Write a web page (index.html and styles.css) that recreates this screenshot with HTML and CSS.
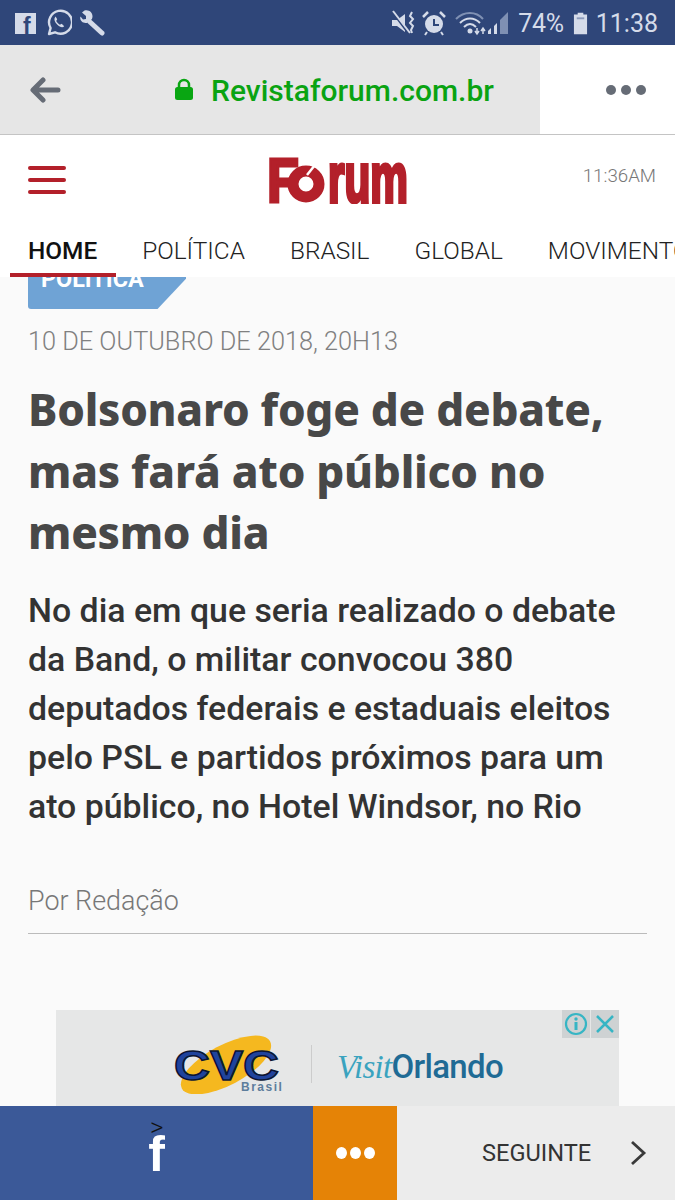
FILE: index.html
```html
<!DOCTYPE html>
<html lang="en">

<head>
    <meta charset="UTF-8">
    <meta name="viewport" content="width=device-width, initial-scale=1.0">
    <title>Forum</title>
    <link rel="stylesheet" href="styles.css">
</head>

<body>

    <div class="status-bar">
        <div class="status-left">
            <svg class="icon-fb" width="21" height="24" viewBox="0 0 21 24">
                <rect x="0" y="2" width="21" height="21" fill="#d5dbe9"/>
                <text x="8" y="23" class="fb-letter">f</text>
            </svg>
            <svg width="26" height="28" viewBox="0 0 26 28" fill="none">
                <path d="M3 25l1.600-6A11.500 11.500 0 1 1 9 23.300z" stroke="#d5dbe9" stroke-width="2.400" stroke-linejoin="round"/>
                <path d="M9 8.500c-1.500 2 .2 5 2.400 7.200s5 3.300 6.800 1.600l-2.500-2.500-1.800 1c-1.500-.8-3-2.400-3.700-3.800l1-1.700-1.600-2.700z" fill="#d5dbe9"/>
            </svg>
            <svg class="icon-wrench" width="26" height="26" viewBox="0 0 26 26" fill="none">
                <path d="M11 12L23 23" stroke="#d5dbe9" stroke-width="5" stroke-linecap="round"/>
                <path d="M3 2.500l4 3.500 0 3-3 0.500L1.500 6.500C0 11 5 14.500 9 12.500L13 9C15 4 11 -1 5.500 0.500z" fill="#d5dbe9"/>
            </svg>
        </div>
        <div class="status-right">
            <svg class="icon-mute" width="26" height="26" viewBox="0 0 26 26" fill="none">
                <path d="M1 9h5l8-6v18L6 15H1z" fill="#d5dbe9" transform="translate(0 1)"/>
                <path d="M2 3l15 20" stroke="#2f4679" stroke-width="2"/>
                <path d="M2 1l17 22" stroke="#d5dbe9" stroke-width="2"/>
                <path d="M21 2l-2 4 3 3-3 4 3 3-2 4 1 3" stroke="#d5dbe9" stroke-width="2"/>
            </svg>
            <svg width="24" height="26" viewBox="0 0 24 26" fill="none">
                <circle cx="12" cy="14" r="9" fill="#d5dbe9"/>
                <path d="M12 9v6h5" stroke="#2f4679" stroke-width="2"/>
                <path d="M1 7l5-5M23 7l-5-5" stroke="#d5dbe9" stroke-width="2.500"/>
                <path d="M5 22l-2 3M19 22l2 3" stroke="#d5dbe9" stroke-width="2"/>
            </svg>
            <svg class="icon-net" width="56" height="26" viewBox="0 0 56 26" fill="none">
                <path d="M1 9C9 1 21 1 28 9" stroke="#7f90b3" stroke-width="2"/>
                <path d="M5 13C11 7 19 7 25 13" stroke="#d5dbe9" stroke-width="2"/>
                <path d="M9 17C13 13 17 13 21 17" stroke="#d5dbe9" stroke-width="2"/>
                <circle cx="15" cy="21" r="2.500" fill="#d5dbe9"/>
                <path d="M22 18v5M20 21l2 3 2-3M28 24v-5M26 21l2-3 2 3" stroke="#d5dbe9" stroke-width="1.500"/>
                <path d="M33 24v-3l3-3v6z" fill="#d5dbe9"/>
                <path d="M39 24V16l3-3v11z" fill="#d5dbe9"/>
                <path d="M45 24V10l8-8v22z" fill="#7f90b3"/>
            </svg>
            <span class="status-text pct">74%</span>
            <svg class="icon-battery" width="15" height="24" viewBox="0 0 16 24">
                <path d="M5 1h6v2h4v21H1V3h4z" fill="#d5dbe9"/>
                <rect x="4" y="6" width="8" height="2" fill="#8c9abb"/>
            </svg>
            <span class="status-text">11:38</span>
        </div>
    </div>

    <div class="browser-bar">
        <div class="address">
            <svg class="back" width="32" height="26" viewBox="0 0 32 26" fill="none">
                <path d="M29 13H5M14 3L4 13l10 10" stroke="#666c76" stroke-width="5" stroke-linecap="round" stroke-linejoin="round"/>
            </svg>
            <div class="url">
                <svg width="20" height="23" viewBox="0 0 20 23" fill="none">
                    <path d="M5 11V7a5 5 0 0 1 10 0v4" stroke="#09a612" stroke-width="2.500"/>
                    <rect x="1" y="9" width="18" height="13" rx="2.500" fill="#09a612"/>
                </svg>
                <span class="url-text">Revistaforum.com.br</span>
            </div>
        </div>
        <div class="browser-menu">
            <span class="dot"></span><span class="dot"></span><span class="dot"></span>
        </div>
    </div>

    <header class="site-header">
        <div class="top-row">
            <div class="burger"><span></span><span></span><span></span></div>
            <div class="logo">
                <svg width="144" height="48" viewBox="0 0 144 48">
                    <text x="1" y="46" textLength="32" lengthAdjust="spacingAndGlyphs" class="logo-text">F</text>
                    <text x="62" y="46" textLength="80" lengthAdjust="spacingAndGlyphs" class="logo-text logo-small">rum</text>
                    <circle cx="40" cy="28" r="13" fill="none" stroke="#b3202a" stroke-width="11"/>
                    <path d="M41 19l8-10" stroke="#fff" stroke-width="2.500"/>
                </svg>
            </div>
            <div class="time">11:36AM</div>
        </div>
        <nav class="nav">
            <a class="active">HOME</a>
            <a>POLÍTICA</a>
            <a>BRASIL</a>
            <a>GLOBAL</a>
            <a>MOVIMENTOS</a>
        </nav>
    </header>

    <main class="article">
        <div class="tag">POLÍTICA</div>
        <div class="date">10 DE OUTUBRO DE 2018, 20H13</div>
        <h1>Bolsonaro foge de debate, mas fará ato público no mesmo dia</h1>
        <p class="lead">No dia em que seria realizado o debate da Band, o militar convocou 380 deputados federais e estaduais eleitos pelo PSL e partidos próximos para um ato público, no Hotel Windsor, no Rio</p>
        <div class="byline">Por Redação</div>
        <div class="ad">
            <div class="ad-close">
                <span class="ad-btn">
                    <svg width="24" height="24" viewBox="0 0 24 24" fill="none">
                        <circle cx="12" cy="12" r="10" stroke="#36b5c4" stroke-width="2.200"/>
                        <path d="M12 10v8" stroke="#36b5c4" stroke-width="3"/>
                        <circle cx="12" cy="7" r="1.700" fill="#36b5c4"/>
                    </svg>
                </span>
                <span class="ad-btn">
                    <svg width="24" height="24" viewBox="0 0 24 24" fill="none">
                        <path d="M4 4l16 16M20 4L4 20" stroke="#36b5c4" stroke-width="2.500"/>
                    </svg>
                </span>
            </div>
            <svg class="cvc" width="112" height="60" viewBox="0 0 112 60">
                <ellipse cx="54" cy="31" rx="50" ry="20" fill="#f5b81f" transform="rotate(-28 54 31)"/>
                <text x="2" y="46" textLength="105" lengthAdjust="spacingAndGlyphs" class="cvc-text">CVC</text>
                <text x="69" y="57" class="cvc-sub">Brasil</text>
            </svg>
            <div class="ad-line"></div>
            <div class="visit"><span class="visit-a">Visit</span><span class="visit-b">Orlando</span></div>
        </div>
    </main>

    <div class="bottom-bar">
        <div class="share-fb">
            <span class="stray">&gt;</span>
            <span class="f">f</span>
        </div>
        <div class="share-more"><span></span><span></span><span></span></div>
        <div class="next">
            <span>SEGUINTE</span>
            <svg width="18" height="28" viewBox="0 0 18 28" fill="none">
                <path d="M3 3l12 11L3 25" stroke="#3a3a3a" stroke-width="2.800"/>
            </svg>
        </div>
    </div>

</body>

</html>
```

FILE: styles.css
```css
* {
    box-sizing: border-box;
}

body {
    margin: 0;
    width: 675px;
    height: 1200px;
    overflow: hidden;
    display: flex;
    flex-direction: column;
    font-family: 'Roboto', sans-serif;
    background-color: #fafafa;
}

.status-bar {
    height: 45px;
    flex: none;
    background-color: #2f4679;
    display: flex;
    justify-content: space-between;
    align-items: center;
    padding: 1px 17px 0 15px;
}

.status-left,
.status-right {
    display: flex;
    align-items: center;
}

.status-left {
    gap: 10px;
}

.status-right {
    gap: 9px;
}

.icon-wrench {
    margin-left: -3px;
}

.icon-mute {
    margin-right: -4px;
}

.icon-battery {
    margin-right: -1px;
}

.fb-letter {
    font-family: 'Liberation Sans', sans-serif;
    font-weight: bold;
    font-size: 23px;
    fill: #2f4679;
}

.status-text {
    color: #d5dbe9;
    font-size: 25px;
}

.pct {
    letter-spacing: -0.3px;
    margin-left: -2px;
}

.browser-bar {
    height: 90px;
    flex: none;
    display: flex;
    border-bottom: 1px solid #c4c4c4;
    background-color: #fff;
}

.address {
    width: 540px;
    background-color: #e6e6e6;
    display: flex;
    align-items: center;
    padding-left: 29px;
}

.url {
    display: flex;
    align-items: center;
    gap: 17px;
    margin-left: 113px;
    color: #0aa312;
    font-size: 30px;
    font-weight: 500;
}

.url-text {
    margin-top: 2px;
}

.browser-menu {
    flex: 1;
    display: flex;
    align-items: center;
    padding-left: 66px;
    gap: 5px;
}

.dot {
    width: 10px;
    height: 10px;
    border-radius: 50%;
    background-color: #666c76;
}

.site-header {
    height: 142px;
    flex: none;
    background-color: #fff;
    position: relative;
    z-index: 1;
}

.top-row {
    height: 89px;
    display: flex;
    align-items: center;
    padding: 0 19px 0 28px;
    position: relative;
}

.burger {
    width: 38px;
    display: flex;
    flex-direction: column;
    gap: 8px;
}

.burger span {
    height: 4px;
    border-radius: 2px;
    background-color: #b3202a;
}

.logo {
    margin-left: 200px;
    height: 48px;
}

.logo-text {
    font-family: 'Liberation Sans', sans-serif;
    font-weight: bold;
    font-size: 63px;
    fill: #b3202a;
    stroke: #b3202a;
    stroke-width: 3px;
}

.logo-small {
    font-size: 70px;
    stroke-width: 4px;
}

.time {
    margin-left: auto;
    margin-top: -8px;
    font-size: 18.7px;
    font-weight: 300;
    color: #777;
}

.nav {
    display: flex;
    height: 53px;
    padding-left: 10px;
    white-space: nowrap;
}

.nav a {
    padding: 12px 18px 0 19px;
    margin-right: 8px;
    font-size: 24.4px;
    font-weight: 300;
    color: #222;
}

.nav a.active {
    font-weight: 500;
    color: #111;
    border-bottom: 4px solid #b3202a;
    margin-right: 7px;
    padding: 12px 19px 0 18px;
}

.article {
    flex: 1;
    min-height: 0;
    overflow: hidden;
    padding: 0 28px;
    background-color: #fafafa;
}

.tag {
    width: 158px;
    height: 52px;
    margin-top: -20px;
    padding: 8px 0 0 13px;
    background-color: #6fa3d5;
    color: #fff;
    font-size: 23.4px;
    font-weight: 700;
    border-radius: 3px;
    clip-path: polygon(0 0, 100% 0, 100% 42%, 82% 100%, 0 100%);
}

.date {
    margin-top: 18px;
    font-size: 25.3px;
    font-weight: 300;
    color: #808080;
}

h1 {
    margin: 23px 0 0;
    font-family: 'Noto Sans', sans-serif;
    font-size: 44px;
    line-height: 61.500px;
    font-weight: 800;
    letter-spacing: -0.25px;
    color: #484848;
}

.lead {
    margin: 22px 0 0;
    font-size: 33.85px;
    line-height: 49px;
    font-weight: 500;
    color: #333;
}

.byline {
    margin-top: 54px;
    padding-bottom: 16px;
    font-size: 26.9px;
    font-weight: 300;
    color: #777;
    border-bottom: 1px solid #bbb;
}

.ad {
    position: relative;
    width: 563px;
    height: 96px;
    margin: 76px 0 0 28px;
    background-color: #e6e7e7;
    display: flex;
    align-items: center;
    padding: 12px 0 0 116px;
}

.ad-close {
    position: absolute;
    top: 0;
    right: 0;
    display: flex;
    gap: 1px;
}

.ad-btn {
    width: 28px;
    height: 28px;
    background-color: #ced2d3;
    display: flex;
    align-items: center;
    justify-content: center;
}

.ad-line {
    width: 1px;
    height: 38px;
    margin: 0 25px 0 27px;
    background-color: #ccc;
}

.cvc-text {
    font-family: 'Liberation Sans', sans-serif;
    font-weight: bold;
    font-size: 42px;
    fill: #20439c;
    stroke: #0b1533;
    stroke-width: 1.500px;
}

.cvc-sub {
    font-family: 'Liberation Sans', sans-serif;
    font-weight: bold;
    font-size: 12px;
    letter-spacing: 1.500px;
    fill: #5d7d9c;
}

.visit {
    margin-top: 6px;
    font-size: 33px;
    letter-spacing: -0.7px;
    white-space: nowrap;
}

.visit-a {
    font-family: 'Liberation Serif', serif;
    font-style: italic;
    color: #3aa3bf;
}

.visit-b {
    font-family: 'Roboto', sans-serif;
    font-weight: 500;
    color: #1f6b95;
}

.bottom-bar {
    height: 94px;
    flex: none;
    display: flex;
    background-color: #ececec;
}

.share-fb {
    width: 313px;
    background-color: #3b5998;
    display: flex;
    flex-direction: column;
    align-items: center;
    position: relative;
}

.stray {
    position: absolute;
    top: 6px;
    left: 150px;
    font-size: 26px;
    font-weight: 300;
    color: #111;
}

.f {
    font-family: 'Liberation Sans', sans-serif;
    font-weight: bold;
    font-size: 50px;
    line-height: 50px;
    margin-top: 23px;
    color: #fff;
}

.share-more {
    width: 84px;
    background-color: #e58306;
    display: flex;
    align-items: center;
    justify-content: center;
    gap: 3px;
}

.share-more span {
    width: 11px;
    height: 12px;
    border-radius: 50%;
    background-color: #fff;
}

.next {
    flex: 1;
    display: flex;
    align-items: center;
    padding-left: 85px;
    gap: 38px;
    color: #333;
    font-size: 23.600px;
    font-weight: 400;
}
```
